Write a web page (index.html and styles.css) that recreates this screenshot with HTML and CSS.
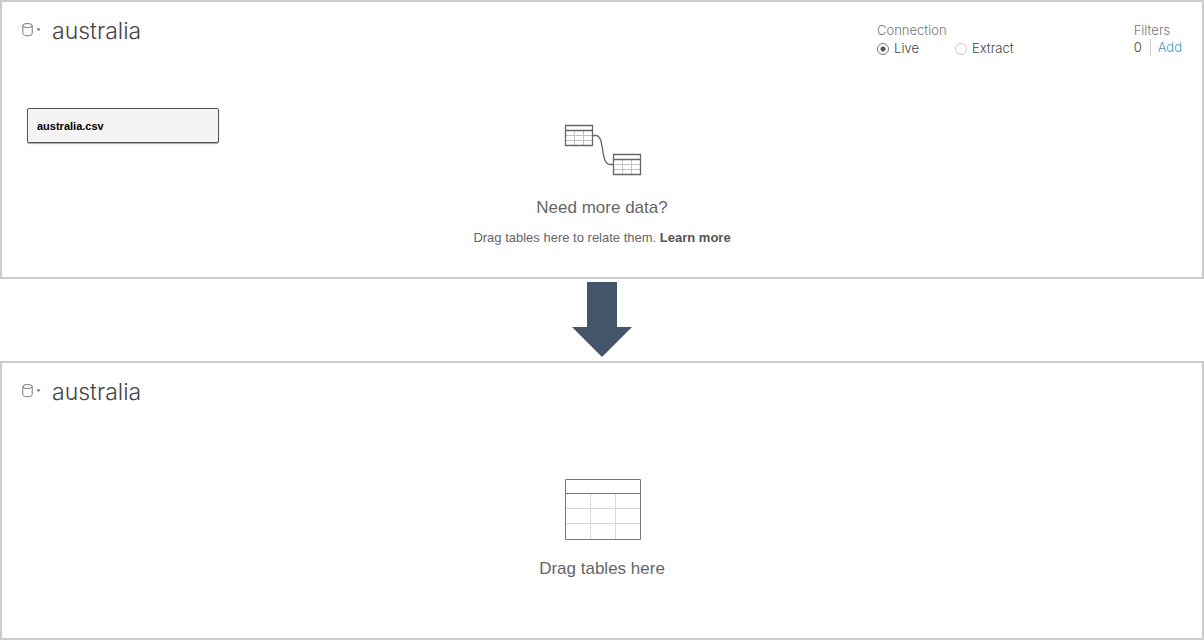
FILE: index.html
```html
<!DOCTYPE html>
<html lang="en">
<head>
<meta charset="utf-8">
<meta name="viewport" content="width=device-width, initial-scale=1">
<title>australia</title>
<link rel="stylesheet" href="styles.css">
</head>
<body>
<main class="page">
  <section class="panel">
    <header class="panel-header">
      <button class="source-menu" type="button" aria-label="Data source menu">
        <svg width="20" height="16" viewBox="0 0 20 16" fill="none" stroke="#777">
          <ellipse cx="5.5" cy="3.500" rx="4.700" ry="2"/>
          <path d="M.8 3.500v8.100c0 1.400 2 2.100 4.700 2.100s4.700-.7 4.700-2.100V3.500"/>
          <path d="M14.500 6.500h4l-2 2.500z" fill="#666" stroke="none"/>
        </svg>
      </button>
      <h1 class="title">australia</h1>
      <div class="settings">
        <fieldset class="connection">
          <legend class="label">Connection</legend>
          <div class="options">
            <label class="option"><input class="radio" type="radio" name="connection" checked>Live</label>
            <label class="option"><input class="radio" type="radio" name="connection">Extract</label>
          </div>
        </fieldset>
        <div class="filters">
          <div class="label">Filters</div>
          <div class="filter-row"><span class="count">0</span><a class="add" href="#">Add</a></div>
        </div>
      </div>
    </header>
    <div class="canvas">
      <button class="table-node" type="button">australia.csv</button>
      <div class="hint">
        <svg width="80" height="54" viewBox="-2 0 80 54" fill="none">
          <path d="M2 12.500h27M2 17.500h27M10.500 8v14M19.500 8v14M50 41.500h27M50 46.500h27M58.500 37v14M67.500 37v14" stroke="#c2c2c2"/>
          <path d="M1.500 2.500h27v20h-27zM1.500 7.500h27M49.500 31.500h27v20h-27zM49.500 36.500h27" stroke="#666" stroke-width="1.300"/>
          <path d="M29 12.500h3c9 0 4 29 14 29h3" stroke="#666" stroke-width="1.300"/>
        </svg>
        <h2 class="hint-title">Need more data?</h2>
        <p class="hint-text">Drag tables here to relate them. <a class="learn" href="#">Learn more</a></p>
      </div>
    </div>
  </section>

  <svg class="arrow" width="60" height="75" viewBox="0 0 60 75"><path d="M15 0h30v45h15L30 75 0 45h15z" fill="#44546a"/></svg>

  <section class="panel">
    <header class="panel-header">
      <button class="source-menu" type="button" aria-label="Data source menu">
        <svg width="20" height="16" viewBox="0 0 20 16" fill="none" stroke="#777">
          <ellipse cx="5.500" cy="3.500" rx="4.700" ry="2"/>
          <path d="M.8 3.500v8.100c0 1.400 2 2.100 4.700 2.100s4.700-.7 4.700-2.100V3.500"/>
          <path d="M14.500 6.500h4l-2 2.500z" fill="#666" stroke="none"/>
        </svg>
      </button>
      <h1 class="title">australia</h1>
    </header>
    <div class="canvas">
      <div class="hint hint-empty">
        <svg width="80" height="64" viewBox="-2 0 80 64" fill="none">
          <path d="M2 30.500h74M2 45.500h74M26.500 16v45M51.500 16v45" stroke="#d6d6d6"/>
          <path d="M1.500 1.500h75v60h-75zM1.500 15.500h75" stroke="#777"/>
        </svg>
        <h2 class="hint-title">Drag tables here</h2>
      </div>
    </div>
  </section>
</main>
</body>
</html>
```
FILE: styles.css
```css
* {
  box-sizing: border-box;
}

body {
  margin: 0;
  background: #fff;
  color: #444;
  font-family: "Liberation Sans", Arial, sans-serif;
}

h1, h2, p, fieldset, legend {
  margin: 0;
  padding: 0;
  border: 0;
}

svg {
  display: block;
}

a {
  text-decoration: none;
}

.page {
  display: grid;
  grid-template-rows: 1fr auto 1fr;
  min-height: 100vh;
}

.panel {
  border: 2px solid #ccc;
}

.arrow {
  justify-self: center;
  margin: 3px 0 4px;
}

.panel-header {
  display: flex;
  align-items: flex-start;
  height: 80px;
  padding: 12px 20px;
}

.source-menu {
  margin-top: 8px;
  padding: 0;
  border: 0;
  background: none;
}

.title {
  margin-left: 10px;
  color: #444;
  font: 300 23px/34px Inter, sans-serif;
}

.settings {
  display: flex;
  gap: 120px;
  margin-left: auto;
  padding-top: 8px;
  font: 300 13px/17px Inter, sans-serif;
}

.connection {
  padding-top: 1px;
}

.label {
  color: #777;
}

.options {
  display: flex;
  gap: 36px;
}

.option {
  display: flex;
  align-items: center;
  gap: 5px;
}

.radio {
  appearance: none;
  width: 12px;
  height: 12px;
  margin: 0;
  border: 1px solid #ccc;
  border-radius: 50%;
}

.radio:checked {
  border-color: #777;
  background: radial-gradient(circle, #555 2px, transparent 3px);
}

.filter-row {
  display: flex;
}

.count {
  padding-right: 8px;
  border-right: 1px solid #ccc;
}

.add {
  padding-left: 7px;
  color: #4a9cbd;
}

.canvas {
  display: grid;
  padding: 26px 25px;
}

.table-node,
.hint {
  grid-area: 1 / 1;
}

.table-node {
  justify-self: start;
  align-self: start;
  width: 192px;
  height: 35px;
  padding: 0 9px;
  border: 1px solid #555;
  border-radius: 2px;
  background: #f4f4f4;
  color: #000;
  font: bold 11px/14px "Liberation Sans", Arial, sans-serif;
  text-align: left;
  box-shadow: 0 1px 1px #aaa;
}

.hint {
  display: flex;
  flex-direction: column;
  align-items: center;
  padding-top: 15px;
  color: #666;
}

.hint-title {
  margin-top: 19px;
  font-size: 17px;
  font-weight: 400;
  line-height: 24px;
}

.hint-text {
  margin-top: 10px;
  font-size: 13px;
  line-height: 16px;
}

.learn {
  color: #555;
  font-weight: 700;
}

.hint-empty {
  padding-top: 9px;
}

.hint-empty .hint-title {
  margin-top: 15px;
}
```
